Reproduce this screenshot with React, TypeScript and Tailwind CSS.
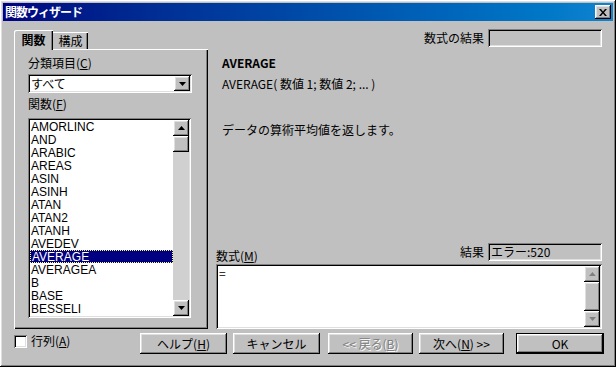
import React from 'react';

const raised =
  'shadow-[inset_-1px_-1px_#000,inset_1px_1px_#fff,inset_-2px_-2px_#808080,inset_2px_2px_#dfdfdf]';
const sunken =
  'shadow-[inset_1px_1px_#808080,inset_-1px_-1px_#fff,inset_2px_2px_#000,inset_-2px_-2px_#dfdfdf]';

const functions = [
  'AMORLINC',
  'AND',
  'ARABIC',
  'AREAS',
  'ASIN',
  'ASINH',
  'ATAN',
  'ATAN2',
  'ATANH',
  'AVEDEV',
  'AVERAGE',
  'AVERAGEA',
  'B',
  'BASE',
  'BESSELI',
];

function Arrow({ up, disabled }: { up?: boolean; disabled?: boolean }) {
  const fill = disabled ? '#808080' : '#000';
  return (
    <svg width="7" height="4" viewBox="0 0 7 4" className={up ? '' : 'rotate-180'}>
      {disabled && <polygon points="4,1 8,5 0,5" fill="#fff" />}
      <polygon points="3.5,0 7,4 0,4" fill={fill} />
    </svg>
  );
}

function ScrollBar({ thumb, disabled }: { thumb: number; disabled?: boolean }) {
  return (
    <div className="flex w-[16px] flex-col bg-[#d0d0d0]">
      <div className={`flex h-[16px] items-center justify-center bg-[#c0c0c0] ${raised}`}>
        <Arrow up disabled={disabled} />
      </div>
      <div className={`bg-[#c0c0c0] ${raised}`} style={{ height: thumb }} />
      <div className="flex-1" />
      <div className={`flex h-[16px] items-center justify-center bg-[#c0c0c0] ${raised}`}>
        <Arrow disabled={disabled} />
      </div>
    </div>
  );
}

function Button({
  children,
  width,
  disabled,
  isDefault,
  className = '',
}: {
  children: React.ReactNode;
  width: number;
  disabled?: boolean;
  isDefault?: boolean;
  className?: string;
}) {
  return (
    <div
      className={`flex h-[21px] items-center justify-center ${className} ${
        isDefault ? 'border border-black' : ''
      }`}
      style={{ width }}
    >
      <div
        className={`flex h-full w-full items-center justify-center bg-[#c0c0c0] text-[12px] ${raised} ${
          disabled ? 'text-[#808080] [text-shadow:1px_1px_#fff]' : 'text-black'
        }`}
      >
        {children}
      </div>
    </div>
  );
}

export default function App() {
  return (
    <div
      className={`flex h-[367px] w-[616px] flex-col bg-[#c0c0c0] p-[3px] font-['Noto_Sans_CJK_JP',sans-serif] text-[12px] leading-[14px] text-black ${raised}`}
    >
      {/* title bar */}
      <div className="flex h-[18px] items-center bg-gradient-to-r from-[#000080] to-[#1084d0] pl-[2px] pr-[2px]">
        <span className="text-[12px] font-bold tracking-[-1px] text-white">関数ウィザード</span>
        <div className={`ml-auto flex h-[14px] w-[16px] items-center justify-center bg-[#c0c0c0] ${raised}`}>
          <svg width="8" height="7" viewBox="0 0 8 7">
            <path d="M0 0h2l2 2.5L6 0h2L5 3.5 8 7H6L4 4.5 2 7H0l3-3.5z" fill="#000" />
          </svg>
        </div>
      </div>

      <div className="flex">
        {/* left column */}
        <div className="ml-[11px] mt-[9px] flex w-[194px] flex-col">
          <div className="flex h-[19px] items-end">
            <div className="relative z-10 -mb-px flex h-[20px] w-[39px] items-center justify-center rounded-tl-[2px] bg-[#c0c0c0] font-bold shadow-[inset_1px_1px_#fff,inset_-1px_0_#000,inset_-2px_0_#808080]">
              関数
            </div>
            <div className="flex h-[17px] w-[35px] items-center justify-center bg-[#c0c0c0] shadow-[inset_0_1px_#fff,inset_-1px_0_#000,inset_-2px_0_#808080]">
              構成
            </div>
          </div>
          <div className="flex h-[280px] flex-col bg-[#c0c0c0] pl-[14px] pt-[7px] shadow-[inset_1px_1px_#fff,inset_-1px_-1px_#000,inset_-2px_-2px_#808080]">
            <div>
              分類項目(<u>C</u>)
            </div>
            <div className={`mt-[4px] flex h-[19px] w-[164px] items-center bg-white p-[2px] ${sunken}`}>
              <span className="flex-1 pl-[1px]">すべて</span>
              <div className={`flex h-[15px] w-[16px] items-center justify-center bg-[#c0c0c0] ${raised}`}>
                <Arrow />
              </div>
            </div>
            <div className="mt-[4px]">
              関数(<u>F</u>)
            </div>
            <div className={`mt-[7px] flex h-[200px] w-[163px] bg-white p-[2px] ${sunken}`}>
              <div className="flex-1 overflow-hidden font-['Liberation_Sans',sans-serif]">
                {functions.map((f) => (
                  <div
                    key={f}
                    className={`flex h-[13px] items-center pl-[1px] text-[12px] leading-[12px] ${
                      f === 'AVERAGE'
                        ? 'border border-dotted border-[#ffff80] bg-[#000080] pl-0 text-white'
                        : ''
                    }`}
                  >
                    {f}
                  </div>
                ))}
              </div>
              <ScrollBar thumb={16} />
            </div>
          </div>
        </div>

        {/* right column */}
        <div className="ml-[8px] mt-[8px] flex h-[300px] w-[386px] flex-col">
          <div className="flex h-[18px] items-center justify-end">
            <span>数式の結果</span>
            <div className={`ml-[4px] h-[18px] w-[114px] ${sunken}`} />
          </div>
          <div className="ml-[6px] mt-[9px] font-bold">AVERAGE</div>
          <div className="ml-[6px] mt-[7px]">AVERAGE( 数値 1; 数値 2; ... )</div>
          <div className="ml-[6px] mt-[32px]">データの算術平均値を返します。</div>
          <div className="flex-1" />
          <div className="flex items-end">
            <span className="-mb-[2px]">
              数式(<u>M</u>)
            </span>
            <span className="ml-auto self-center">結果</span>
            <div className={`ml-[4px] flex h-[18px] w-[114px] items-center pl-[3px] ${sunken}`}>
              エラー:520
            </div>
          </div>
          <div className={`mt-[3px] flex h-[65px] bg-white p-[2px] ${sunken}`}>
            <div className="flex-1 pl-[1px] leading-[13px]">=</div>
            <ScrollBar thumb={29} disabled />
          </div>
        </div>
      </div>

      {/* bottom row */}
      <div className="mt-[4px] flex items-start">
        <div className="ml-[11px] mt-[1px] flex w-[126px] items-center">
          <div className={`h-[13px] w-[13px] bg-white ${sunken}`} />
          <span className="ml-[4px]">
            行列(<u>A</u>)
          </span>
        </div>
        <Button width={87}>
          ヘルプ(<u>H</u>)
        </Button>
        <Button width={87} className="ml-[6px]">
          キャンセル
        </Button>
        <Button width={85} className="ml-[8px]" disabled>
          &lt;&lt; 戻る(<u>B</u>)
        </Button>
        <Button width={85} className="ml-[6px]">
          次へ(<u>N</u>) &gt;&gt;
        </Button>
        <Button width={88} className="ml-[12px]" isDefault>
          OK
        </Button>
      </div>
    </div>
  );
}
